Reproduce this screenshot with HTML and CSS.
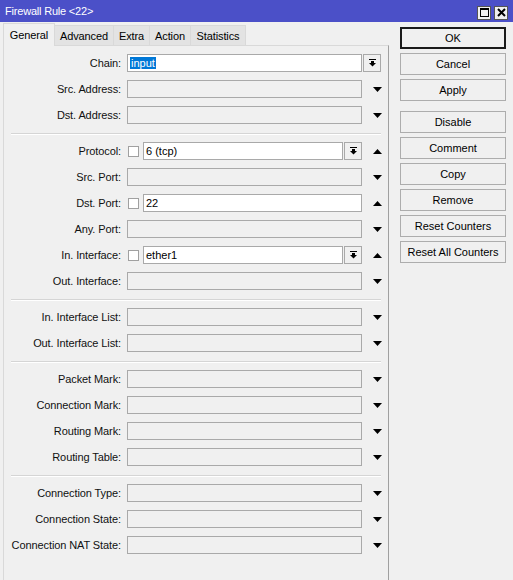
FILE: index.html
```html
<!DOCTYPE html>
<html lang="en">
<head>
  <meta charset="UTF-8">
  <title>Firewall Rule &lt;22&gt;</title>
  <link rel="stylesheet" href="styles.css">
</head>
<body>
  <div class="window">
    <!-- title bar -->
    <div class="titlebar">
      <span class="title">Firewall Rule &lt;22&gt;</span>
      <div class="tb-btns">
        <span class="tb-btn">
          <svg width="9" height="9" viewBox="0 0 9 9"><rect x="0.5" y="0.5" width="8" height="8" fill="none" stroke="#000"/><rect x="0" y="0" width="9" height="2" fill="#000"/></svg>
        </span>
        <span class="tb-btn">
          <svg width="9" height="9" viewBox="0 0 9 9"><path d="M1 1L8 8M8 1L1 8" stroke="#000" stroke-width="2"/></svg>
        </span>
      </div>
    </div>

    <div class="main">
      <div class="left">
        <!-- tabs -->
        <div class="tabs">
          <div class="tab active">General</div>
          <div class="tab t-adv">Advanced</div>
          <div class="tab t-extra">Extra</div>
          <div class="tab t-action">Action</div>
          <div class="tab t-stats">Statistics</div>
        </div>

        <div class="panel">
          <div class="row">
            <span class="lbl">Chain:</span>
            <div class="field">
              <div class="box white"><span class="sel">input</span></div>
              <span class="ddbtn wide"><svg width="7" height="8" viewBox="0 0 7 8"><rect x="0" y="0" width="7" height="1"/><rect x="2" y="2" width="3" height="2"/><polygon points="0,4 7,4 3.5,7.5"/></svg></span>
            </div>
          </div>
          <div class="row">
            <span class="lbl">Src. Address:</span>
            <div class="field"><div class="box"></div></div>
            <span class="arrow"><svg width="9" height="5" viewBox="0 0 9 5"><polygon points="0,0 9,0 4.5,5"/></svg></span>
          </div>
          <div class="row">
            <span class="lbl">Dst. Address:</span>
            <div class="field"><div class="box"></div></div>
            <span class="arrow"><svg width="9" height="5" viewBox="0 0 9 5"><polygon points="0,0 9,0 4.5,5"/></svg></span>
          </div>

          <div class="sep"></div>

          <div class="row">
            <span class="lbl">Protocol:</span>
            <div class="field">
              <span class="chk"></span>
              <div class="box white">6 (tcp)</div>
              <span class="ddbtn"><svg width="7" height="8" viewBox="0 0 7 8"><rect x="0" y="0" width="7" height="1"/><rect x="2" y="2" width="3" height="2"/><polygon points="0,4 7,4 3.5,7.5"/></svg></span>
            </div>
            <span class="arrow"><svg width="9" height="5" viewBox="0 0 9 5"><polygon points="0,5 9,5 4.5,0"/></svg></span>
          </div>
          <div class="row">
            <span class="lbl">Src. Port:</span>
            <div class="field"><div class="box"></div></div>
            <span class="arrow"><svg width="9" height="5" viewBox="0 0 9 5"><polygon points="0,0 9,0 4.5,5"/></svg></span>
          </div>
          <div class="row">
            <span class="lbl">Dst. Port:</span>
            <div class="field">
              <span class="chk"></span>
              <div class="box white">22</div>
            </div>
            <span class="arrow"><svg width="9" height="5" viewBox="0 0 9 5"><polygon points="0,5 9,5 4.5,0"/></svg></span>
          </div>
          <div class="row">
            <span class="lbl">Any. Port:</span>
            <div class="field"><div class="box"></div></div>
            <span class="arrow"><svg width="9" height="5" viewBox="0 0 9 5"><polygon points="0,0 9,0 4.5,5"/></svg></span>
          </div>
          <div class="row">
            <span class="lbl">In. Interface:</span>
            <div class="field">
              <span class="chk"></span>
              <div class="box white">ether1</div>
              <span class="ddbtn"><svg width="7" height="8" viewBox="0 0 7 8"><rect x="0" y="0" width="7" height="1"/><rect x="2" y="2" width="3" height="2"/><polygon points="0,4 7,4 3.5,7.5"/></svg></span>
            </div>
            <span class="arrow"><svg width="9" height="5" viewBox="0 0 9 5"><polygon points="0,5 9,5 4.5,0"/></svg></span>
          </div>
          <div class="row">
            <span class="lbl">Out. Interface:</span>
            <div class="field"><div class="box"></div></div>
            <span class="arrow"><svg width="9" height="5" viewBox="0 0 9 5"><polygon points="0,0 9,0 4.5,5"/></svg></span>
          </div>

          <div class="sep"></div>

          <div class="row">
            <span class="lbl">In. Interface List:</span>
            <div class="field"><div class="box"></div></div>
            <span class="arrow"><svg width="9" height="5" viewBox="0 0 9 5"><polygon points="0,0 9,0 4.5,5"/></svg></span>
          </div>
          <div class="row">
            <span class="lbl">Out. Interface List:</span>
            <div class="field"><div class="box"></div></div>
            <span class="arrow"><svg width="9" height="5" viewBox="0 0 9 5"><polygon points="0,0 9,0 4.5,5"/></svg></span>
          </div>

          <div class="sep"></div>

          <div class="row">
            <span class="lbl">Packet Mark:</span>
            <div class="field"><div class="box"></div></div>
            <span class="arrow"><svg width="9" height="5" viewBox="0 0 9 5"><polygon points="0,0 9,0 4.5,5"/></svg></span>
          </div>
          <div class="row">
            <span class="lbl">Connection Mark:</span>
            <div class="field"><div class="box"></div></div>
            <span class="arrow"><svg width="9" height="5" viewBox="0 0 9 5"><polygon points="0,0 9,0 4.5,5"/></svg></span>
          </div>
          <div class="row">
            <span class="lbl">Routing Mark:</span>
            <div class="field"><div class="box"></div></div>
            <span class="arrow"><svg width="9" height="5" viewBox="0 0 9 5"><polygon points="0,0 9,0 4.5,5"/></svg></span>
          </div>
          <div class="row">
            <span class="lbl">Routing Table:</span>
            <div class="field"><div class="box"></div></div>
            <span class="arrow"><svg width="9" height="5" viewBox="0 0 9 5"><polygon points="0,0 9,0 4.5,5"/></svg></span>
          </div>

          <div class="sep"></div>

          <div class="row">
            <span class="lbl">Connection Type:</span>
            <div class="field"><div class="box"></div></div>
            <span class="arrow"><svg width="9" height="5" viewBox="0 0 9 5"><polygon points="0,0 9,0 4.5,5"/></svg></span>
          </div>
          <div class="row">
            <span class="lbl">Connection State:</span>
            <div class="field"><div class="box"></div></div>
            <span class="arrow"><svg width="9" height="5" viewBox="0 0 9 5"><polygon points="0,0 9,0 4.5,5"/></svg></span>
          </div>
          <div class="row">
            <span class="lbl">Connection NAT State:</span>
            <div class="field"><div class="box"></div></div>
            <span class="arrow"><svg width="9" height="5" viewBox="0 0 9 5"><polygon points="0,0 9,0 4.5,5"/></svg></span>
          </div>
        </div>
      </div>

      <!-- buttons on the right -->
      <div class="side">
        <div class="btn default">OK</div>
        <div class="btn">Cancel</div>
        <div class="btn group-end">Apply</div>
        <div class="btn">Disable</div>
        <div class="btn">Comment</div>
        <div class="btn">Copy</div>
        <div class="btn">Remove</div>
        <div class="btn">Reset Counters</div>
        <div class="btn">Reset All Counters</div>
      </div>
    </div>
  </div>
</body>
</html>
```

FILE: styles.css
```css
/* whole dialog */
body {
    margin: 0;
    background: #f0f0f0;
    font-family: "Liberation Sans", Arial, sans-serif;
    font-size: 11px;
    color: #000;
}

.window {
    width: 513px;
    height: 580px;
    overflow: hidden;
}

/* title bar */
.titlebar {
    height: 22px;
    background: #4b50c8;
    color: #fff;
    display: flex;
    align-items: center;
    justify-content: space-between;
    padding: 0 5px 0 5px;
    box-sizing: border-box;
}

.title {
    font-size: 11px;
    letter-spacing: -0.2px;
}

.tb-btns {
    display: flex;
    gap: 3px;
    margin-top: 3px;
}

.tb-btn {
    width: 14px;
    height: 14px;
    box-sizing: border-box;
    background: #f0f0f0;
    border: 1px solid #555;
    display: flex;
    align-items: center;
    justify-content: center;
}

/* layout */
.main {
    display: flex;
    padding: 1px 0 0 3px;
}

.left {
    width: 386px;
}

/* tabs */
.tabs {
    display: flex;
    align-items: flex-end;
    height: 22px;
    letter-spacing: -0.1px;
}

.tab {
    height: 20px;
    line-height: 20px;
    box-sizing: border-box;
    text-align: center;
    background: #e3e3e3;
    border: 1px solid #d9d9d9;
    border-bottom: none;
    border-left: none;
}

.tab.active {
    width: 52px;
    height: 23px;
    line-height: 22px;
    background: #f0f0f0;
    border-left: 1px solid #d9d9d9;
    margin-bottom: -1px;
    position: relative;
    z-index: 1;
}

.t-adv { width: 59px; }
.t-extra { width: 36px; }
.t-action { width: 41px; }
.t-stats { width: 55px; }

.panel {
    height: 535px;
    box-sizing: border-box;
    border: 1px solid #d9d9d9;
    border-right-color: #a0a0a0;
    border-bottom: none;
    padding-top: 4px;
}

/* form rows */
.row {
    display: grid;
    grid-template-columns: 117px 235px 19px;
    column-gap: 6px;
    align-items: center;
    height: 26px;
}

.lbl {
    text-align: right;
    white-space: nowrap;
    color: #111;
    letter-spacing: -0.1px;
}

.field {
    display: flex;
    align-items: center;
    height: 18px;
}

.box {
    flex: 1;
    height: 18px;
    box-sizing: border-box;
    border: 1px solid #a9a9a9;
    padding-left: 2px;
    line-height: 16px;
    white-space: nowrap;
}

.box.white {
    background: #fff;
}

.sel {
    background: #0078d7;
    color: #fff;
    padding: 0 1px;
}

.chk {
    width: 11px;
    height: 11px;
    box-sizing: border-box;
    background: #fff;
    border: 1px solid #a0a0a0;
    margin: 0 4px 0 1px;
}

.ddbtn {
    width: 18px;
    height: 18px;
    box-sizing: border-box;
    border: 1px solid #a9a9a9;
    background: #f0f0f0;
    margin-left: 1px;
    display: flex;
    align-items: center;
    justify-content: center;
}

.ddbtn.wide {
    margin-right: -19px;
    margin-left: 1px;
}

.arrow {
    display: flex;
    justify-content: center;
    align-items: center;
}

.sep {
    margin: 5px 7px 3px 7px;
    height: 0;
    border-top: 1px solid #d5d5d5;
    border-bottom: 1px solid #fff;
}

/* right hand buttons */
.side {
    padding: 4px 0 0 11px;
}

.btn {
    width: 106px;
    height: 22px;
    box-sizing: border-box;
    border: 1px solid #adadad;
    background: #f0f0f0;
    margin-bottom: 4px;
    display: flex;
    align-items: center;
    justify-content: center;
}

.btn.default {
    border: 2px solid #1a1a1a;
}

.btn.group-end {
    margin-bottom: 10px;
}
```
